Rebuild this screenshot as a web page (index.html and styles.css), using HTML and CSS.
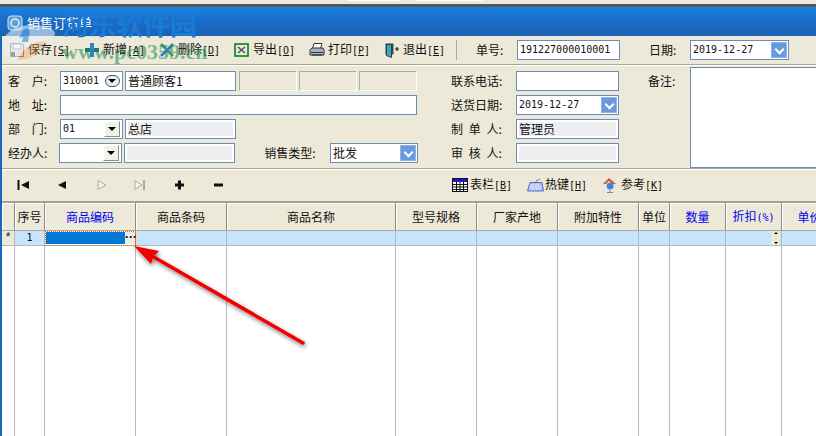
FILE: index.html

```html
<!DOCTYPE html>
<html lang="zh-CN">
<head>
  <meta charset="UTF-8">
  <title>销售订货单</title>
  <link rel="stylesheet" href="styles.css">
</head>
<body>

  <div class="topstrip"><span class="tab tab1"></span><span class="tab tab2"></span></div>

  <div class="window">
    <div class="titlebar">
      <svg class="title-icon" width="16" height="16" viewBox="0 0 16 16"><rect x="1" y="1" width="14" height="14" rx="3" fill="#5f9fd8" stroke="#cfe2f2"/><circle cx="8" cy="8" r="4" fill="none" stroke="#e6f0f8" stroke-width="1.5"/></svg>
      <span>销售订货单</span>
    </div>

    <div class="toolbar">
      <div class="tool">
        <svg width="16" height="16" viewBox="0 0 16 16"><path d="M1.500 1.500h12l1 1v12h-13z" fill="#e8e4d4" stroke="#666"/><rect x="4" y="2" width="8" height="5" fill="#fff" stroke="#888"/><rect x="2" y="10" width="4" height="5" fill="#222"/></svg>
        <span class="tool-label">保存<span class="en">[<u>S</u>]</span></span>
      </div>
      <div class="tool">
        <svg width="16" height="16" viewBox="0 0 16 16"><rect x="1" y="6" width="14" height="4" fill="#2f6f7f"/><rect x="6" y="1" width="4" height="14" fill="#2f86c8"/></svg>
        <span class="tool-label">新增<span class="en">[<u>A</u>]</span></span>
      </div>
      <div class="tool">
        <svg width="16" height="16" viewBox="0 0 16 16"><path d="M2 2l12 12" stroke="#4f8f7f" stroke-width="2.600"/><path d="M14 2L2 14" stroke="#2f7fc8" stroke-width="2.600"/></svg>
        <span class="tool-label">删除<span class="en">[<u>D</u>]</span></span>
      </div>
      <div class="tool">
        <svg width="16" height="16" viewBox="0 0 16 16"><rect x="1" y="2" width="13" height="12" fill="#e8e8e8" stroke="#0a7f0a" stroke-width="1.600"/><path d="M4 5l7 6M11 5l-7 6" stroke="#555" stroke-width="1.600"/></svg>
        <span class="tool-label">导出<span class="en">[<u>O</u>]</span></span>
      </div>
      <div class="tool">
        <svg width="16" height="16" viewBox="0 0 16 16"><path d="M5 1.500h8l-1.500 5h-8z" fill="#fff" stroke="#333"/><path d="M1 8l2-2h11l1 2v5H1z" fill="#a8b4c4" stroke="#333"/><path d="M2 10.500h12" stroke="#333"/><rect x="3" y="12" width="10" height="2" fill="#555"/></svg>
        <span class="tool-label">打印<span class="en">[<u>P</u>]</span></span>
      </div>
      <div class="tool">
        <svg width="16" height="16" viewBox="0 0 16 16"><path d="M1.500 1.500h8v11h-8z" fill="#444"/><path d="M2.500 2.500h5v13l-5-2z" fill="#3fa8c8" stroke="#244"/><path d="M11 7h4M13 5v4" stroke="#222" stroke-width="1.200"/></svg>
        <span class="tool-label">退出<span class="en">[<u>E</u>]</span></span>
      </div>
      <span class="sep"></span>
      <label class="bar-label bar-no">单号:</label>
      <div class="field bar-input en">191227000010001</div>
      <label class="bar-label bar-date">日期:</label>
      <div class="field bar-select en">2019-12-27<span class="drop"></span></div>
    </div>

    <div class="form">
      <div class="col-left">
        <div class="row">
          <label class="lbl wide">客 户:</label>
          <div class="field w63 en">310001<span class="combo flat"></span></div>
          <div class="field w111">普通顾客1</div>
          <div class="sunken first"></div>
          <div class="sunken"></div>
          <div class="sunken"></div>
        </div>
        <div class="row">
          <label class="lbl wide">地 址:</label>
          <div class="field w357"></div>
        </div>
        <div class="row">
          <label class="lbl wide">部 门:</label>
          <div class="field w63 en">01<span class="combo"></span></div>
          <div class="field w111 locked">总店</div>
        </div>
        <div class="row">
          <label class="lbl">经办人:</label>
          <div class="field w63"><span class="combo"></span></div>
          <div class="field w111 locked"></div>
          <label class="lbl-type">销售类型:</label>
          <div class="field w88">批发<span class="drop"></span></div>
        </div>
      </div>

      <div class="col-mid">
        <div class="row"><label class="lbl-mid">联系电话:</label><div class="field w103"></div></div>
        <div class="row"><label class="lbl-mid">送货日期:</label><div class="field w103 en">2019-12-27<span class="drop"></span></div></div>
        <div class="row"><label class="lbl-mid spaced">制 单 人:</label><div class="field w103 locked">管理员</div></div>
        <div class="row"><label class="lbl-mid spaced">审 核 人:</label><div class="field w103 locked"></div></div>
      </div>

      <div class="col-note">
        <label class="lbl-note">备注:</label>
        <div class="note"></div>
      </div>
    </div>

    <div class="nav">
      <div class="nav-btn"><svg width="13" height="10" viewBox="0 0 13 10"><path d="M1.500 0v10" stroke="#111" stroke-width="2"/><path d="M12 1v8L4 5z" fill="#111"/></svg></div>
      <div class="nav-btn"><svg width="13" height="10" viewBox="0 0 13 10"><path d="M10 1v8L2 5z" fill="#111"/></svg></div>
      <div class="nav-btn"><svg width="13" height="10" viewBox="0 0 13 10"><path d="M3 .5v9L11 5z" fill="#f4f2e8" stroke="#aaa"/></svg></div>
      <div class="nav-btn"><svg width="13" height="10" viewBox="0 0 13 10"><path d="M1 .5v9L8 5z" fill="#f4f2e8" stroke="#aaa"/><path d="M10 0v10" stroke="#aaa" stroke-width="2"/></svg></div>
      <div class="nav-btn"><svg width="13" height="10" viewBox="0 0 13 10"><path d="M2 5h9M6.500 .5v9" stroke="#111" stroke-width="3"/></svg></div>
      <div class="nav-btn"><svg width="13" height="10" viewBox="0 0 13 10"><path d="M2 5h9" stroke="#111" stroke-width="3"/></svg></div>
      <div class="nav-tools">
        <div class="tool2">
          <svg width="17" height="14" viewBox="0 0 17 14"><rect x=".5" y=".5" width="15" height="13" fill="#fff" stroke="#111"/><rect x="1" y="1" width="14" height="3" fill="#1a1ad0"/><path d="M1 6.500h14M1 9h14M1 11.500h14M4.500 4v9M8 4v9M11.500 4v9" stroke="#111"/></svg>
          <span>表栏<span class="en">[<u>B</u>]</span></span>
        </div>
        <div class="tool2">
          <svg width="17" height="14" viewBox="0 0 17 14"><path d="M3 4.500h12l1.500 8.500H.5z" fill="#b4bff0" stroke="#5a68d0"/><path d="M3.500 7h10M3 9h11M4 11h9" stroke="#fff" stroke-dasharray="1.500 1"/><path d="M9 4c0-3 3-1 4-3.500" fill="none" stroke="#5a68d0"/></svg>
          <span>热键<span class="en">[<u>H</u>]</span></span>
        </div>
        <div class="tool2">
          <svg width="16" height="16" viewBox="0 0 16 16"><path d="M7 1L1 7h2v6h9V7h2z" fill="#fff" stroke="#d8d8e8"/><path d="M7 1L1 7h3l3-3 3 3h4z" fill="#d85a20"/><circle cx="8" cy="9" r="3.500" fill="#3f86d8"/><path d="M8 13v2M5 15.500h6" stroke="#888"/></svg>
          <span>参考<span class="en">[<u>K</u>]</span></span>
        </div>
      </div>
    </div>

    <div class="grid-wrap">
      <table class="grid">
        <colgroup>
          <col class="c13"><col class="c30"><col class="c91"><col class="c91"><col class="c169"><col class="c81"><col class="c81"><col class="c81"><col class="c31"><col class="c56"><col class="c56"><col class="c56">
        </colgroup>
        <thead>
          <tr>
            <th></th><th>序号</th><th class="req">商品编码</th><th>商品条码</th><th>商品名称</th><th>型号规格</th><th>厂家产地</th><th>附加特性</th><th>单位</th><th class="req">数量</th><th class="req">折扣<span class="en">(%)</span></th><th class="req">单价</th>
          </tr>
        </thead>
        <tbody>
          <tr class="current">
            <td class="mark">*</td>
            <td class="seq en">1</td>
            <td class="active"><div class="active-in"><span class="active-fill"></span><span class="dots">···</span></div></td>
            <td></td><td></td><td></td><td></td><td></td><td></td><td></td>
            <td><div class="spin-cell"><span class="spin"><i class="up"></i><i class="down"></i></span></div></td>
            <td></td>
          </tr>
          <tr class="filler">
            <td></td><td></td><td></td><td></td><td></td><td></td><td></td><td></td><td></td><td></td><td></td><td></td>
          </tr>
        </tbody>
      </table>
    </div>
  </div>

  <!-- site watermark over the title bar -->
  <svg class="wm-logo" width="56" height="38" viewBox="0 0 56 38">
    <path d="M2 18C4 6 20 0 36 1c10 1 18 4 18 9-2 4-6 7-10 7-12 1-22 9-28 19C8 36 1 28 2 18z" fill="#e8f0f6" opacity=".75"/>
    <path d="M16 36c4-10 14-18 28-19-3 9-9 15-16 17-4 1-8 2-12 2z" fill="#f0a050" opacity=".45"/>
    <path d="M22 6c6-3 8 0 6 6l-1 6h-6l1-5-4 1z" fill="#3a8fd8" opacity=".8"/>
  </svg>
  <div class="wm-name">河东软件园</div>
  <div class="wm-url">www.pc0359.cn</div>

  <!-- red arrow annotation -->
  <svg class="arrow" width="816" height="436" viewBox="0 0 816 436">
    <defs>
      <filter id="sh" x="-20%" y="-20%" width="150%" height="150%"><feDropShadow dx="1" dy="2" stdDeviation="2" flood-color="#000" flood-opacity=".55"/></filter>
    </defs>
    <g filter="url(#sh)">
      <path d="M303 343L152 256" stroke="#f00000" stroke-width="3.500" stroke-linecap="round"/>
      <path d="M134 246L159 251 153 257 151 264z" fill="#f00000"/>
    </g>
  </svg>

</body>
</html>
```

FILE: styles.css

```css
* { box-sizing: border-box; }
html, body { margin: 0; height: 436px; overflow: hidden; }
body { background: #ece9d8; color: #111; font: 12px/20px "Noto Sans CJK SC", "Liberation Sans", sans-serif; position: relative; }
.en { font-family: "DejaVu Sans Mono", "Noto Sans CJK SC", monospace; font-size: 10px; }
label { white-space: pre; }
u { text-decoration: underline; }

.topstrip { height: 4px; display: flex; align-items: flex-start; }
.tab { height: 1px; background: #fff; }
.tab1 { width: 53px; margin-left: 347px; }
.tab2 { width: 67px; margin-left: 15px; }

.window { height: 432px; border-left: 2px solid #1b66bd; }

.titlebar { height: 32px; margin-left: -2px; padding: 3px 0 0 7px; display: flex; align-items: center; gap: 4px; color: #fff; font-size: 13px; border-top: 3px solid #55585a; background: linear-gradient(#1b82e2, #1a6fcc 40%, #1b62b4); }
.title-icon { flex: none; }

.toolbar { height: 29px; padding-left: 7px; display: flex; align-items: center; border-bottom: 1px solid #a9a79c; }
.tool { width: 75px; display: flex; align-items: center; gap: 3px; white-space: nowrap; flex: none; }
.sep { width: 1px; height: 20px; background: #a8a8a8; margin-left: -3px; }
.bar-label { width: 41px; }
.bar-no { margin-left: 19px; }
.bar-date { margin-left: 29px; }
.bar-input { width: 103px; }
.bar-select { width: 99px; }

.field { height: 20px; border: 1px solid #6c8dbc; background: #fff; padding: 0 2px; line-height: 18px; position: relative; flex: none; white-space: nowrap; overflow: hidden; }
.locked { background: #efefef; box-shadow: inset 0 0 0 2px #fff; }
.w63 { width: 63px; }
.w88 { width: 88px; }
.w103 { width: 103px; }
.w111 { width: 111px; }
.w357 { width: 357px; }
.sunken { width: 58px; height: 20px; border: 1px solid; border-color: #aeac9f #fff #fff #aeac9f; flex: none; }
.sunken.first { margin-left: 1px; }

.form { height: 104px; padding-top: 5px; display: flex; border-top: 1px solid #fff; border-bottom: 1px solid #a9a79c; box-shadow: 0 1px 0 #fff; }
.row { height: 20px; margin-bottom: 4px; display: flex; gap: 2px; }
.col-left { width: 416px; padding-left: 6px; flex: none; }
.lbl { width: 50px; }
.lbl.wide { word-spacing: 9px; }
.lbl-type { margin-left: 27px; width: 65px; }
.col-mid { width: 230px; padding-left: 33px; flex: none; }
.lbl-mid { width: 63px; }
.lbl-mid.spaced { word-spacing: 3px; }
.col-note { flex: 1; display: flex; margin-top: -4px; min-width: 0; }
.lbl-note { width: 42px; padding-top: 4px; flex: none; }
.note { flex: 1; height: 101px; background: #fff; border: 1px solid #6c8dbc; border-right: 0; }

.combo { position: absolute; right: 2px; top: 1px; width: 16px; height: 16px; background: #f2f1ea; border: 1px solid; border-color: #fff #8f8e86 #8f8e86 #fff; }
.combo::after { content: ""; position: absolute; left: 3px; top: 5px; border: 4px solid transparent; border-top: 4px solid #000; border-bottom: 0; }
.combo.flat { border-radius: 6px; border: 1px solid #555; background: #e8eef2; height: 12px; top: 3px; width: 15px; }
.combo.flat::after { left: 2px; top: 3px; }
.drop { position: absolute; right: 1px; top: 1px; width: 16px; height: 16px; background: #6a9ade; border: 1px solid #8fb4e6; }
.drop::after { content: ""; position: absolute; left: 4px; top: 3px; width: 5px; height: 5px; border: solid #fff; border-width: 0 2px 2px 0; transform: rotate(45deg); }

.nav { height: 34px; padding-left: 15px; display: flex; align-items: center; border-bottom: 2px solid #a0a0a0; }
.nav-btn { width: 39px; display: flex; flex: none; height: 10px; }
.nav-tools { margin-left: 201px; display: flex; }
.tool2 { width: 75px; display: flex; align-items: center; gap: 1px; white-space: nowrap; flex: none; }
.tool2 + .tool2 + .tool2 { gap: 3px; }

.grid-wrap { height: 233px; overflow: hidden; background: #fff; }
.grid { border-collapse: separate; border-spacing: 0; table-layout: fixed; width: 836px; }
.c13 { width: 13px; }
.c30 { width: 30px; }
.c31 { width: 31px; }
.c56 { width: 56px; }
.c81 { width: 81px; }
.c91 { width: 91px; }
.c169 { width: 169px; }
.grid th { height: 28px; padding: 0; background: #ece9d8; font-weight: normal; border-right: 1px solid #8a8a8a; border-bottom: 1px solid #a8a8a8; box-shadow: inset 1px 1px 0 #fff; white-space: nowrap; overflow: hidden; }
.grid th.req { color: #0000f0; }
.grid td { padding: 0; border-right: 1px solid #b8b8b8; line-height: 14px; }
.current td { height: 15px; background: #c6e4fc; border-bottom: 1px solid #b8b8b8; }
.current td.mark { background: #ece9d8; text-align: center; font: 12px/14px "Liberation Mono", monospace; }
.seq { text-align: center; }
.filler td { height: 200px; background: #fff; }

.current td.active { background: #fff; outline: 1px dotted #e07000; outline-offset: -1px; border-right-color: #e07000; }
.active-in { display: flex; height: 14px; padding: 1px 0 1px 1px; }
.active-fill { flex: 1; background: #0078d7; }
.dots { width: 10px; background: #ececec; color: #000; font: bold 12px/10px "Liberation Sans", sans-serif; text-align: center; }
.spin-cell { display: flex; justify-content: flex-end; padding-right: 1px; }
.spin { width: 9px; height: 14px; display: flex; flex-direction: column; justify-content: space-between; background: #ece9d8; }
.spin i { display: block; margin: 1px auto; border: 2.500px solid transparent; }
.spin .up { border-top: 0; border-bottom-color: #000; }
.spin .down { border-bottom: 0; border-top-color: #000; }

.wm-logo { position: absolute; left: 1px; top: 24px; opacity: .8; }
.wm-name { position: absolute; left: 62px; top: 8px; font: bold 27px/32px "Noto Sans CJK SC", sans-serif; color: #1a7ad8; white-space: nowrap; }
.wm-url { position: absolute; left: 62px; top: 40px; font: bold 22px/24px "Liberation Serif", serif; color: rgba(20, 140, 70, .55); white-space: nowrap; }
.arrow { position: absolute; left: 0; top: 0; pointer-events: none; }
```
